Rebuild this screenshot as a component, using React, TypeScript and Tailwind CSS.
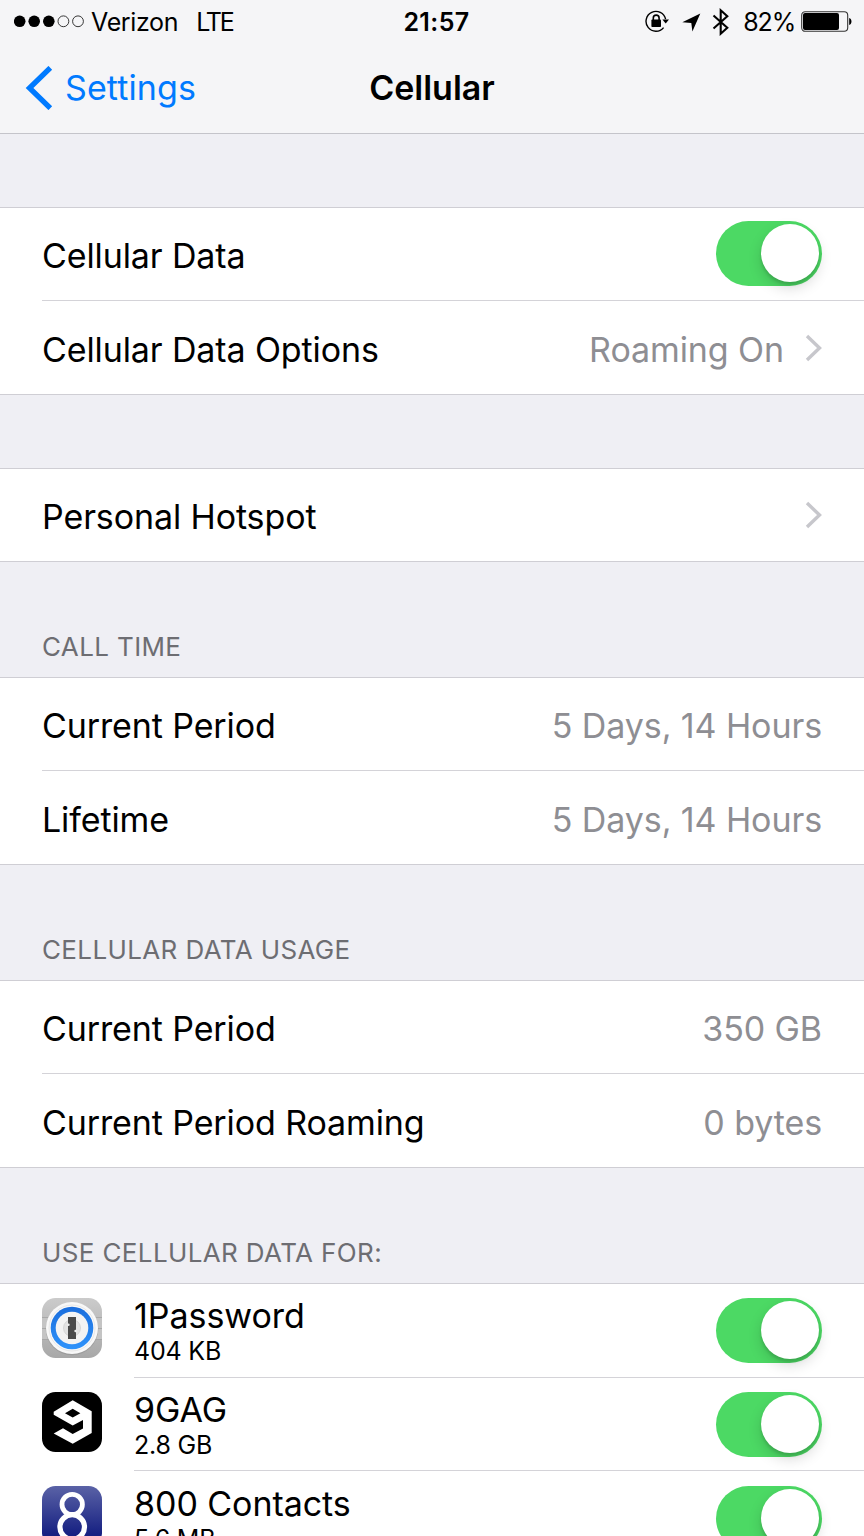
import type { ReactNode } from "react";

type RowProps = {
  label: string;
  value?: string;
  chevron?: boolean;
  toggle?: boolean;
  last?: boolean;
  only?: boolean;
};

function Chevron() {
  return (
    <svg width="17" height="28" viewBox="0 0 17 28" fill="none" className="ml-[21px] shrink-0">
      <path d="M2 2 L14.5 14 L2 26" stroke="#c7c7cc" strokeWidth="3.4" />
    </svg>
  );
}

function Toggle() {
  return (
    <button className="flex h-[65px] w-[106px] shrink-0 items-start justify-end rounded-full bg-[#4cd964] pt-[3px] pr-[3px]">
      <span className="size-[58px] rounded-full bg-white shadow-[0_6px_14px_rgba(0,0,0,0.15),0_3px_3px_rgba(0,0,0,0.12)]" />
    </button>
  );
}

function Row({ label, value, chevron, toggle, last, only }: RowProps) {
  // the last row of a group has no inset divider
  const border = last || only ? "" : "border-b border-[#d4d3d8]";
  const height = only ? "h-[92px]" : "h-[93px]";
  const textPad = last ? "pt-[5px]" : "pt-[3px]";

  return (
    <div className="pl-[42px]">
      <div className={`flex items-center justify-between pr-[42px] ${height} ${border}`}>
        <span className={`text-[34px] leading-10 tracking-[-0.11px] text-black ${textPad}`}>{label}</span>
        <div className="flex items-center">
          {value && (
            <span className={`text-[34px] leading-10 tracking-[-0.09px] text-[#8e8e93] ${textPad}`}>{value}</span>
          )}
          {chevron && <Chevron />}
          {toggle && (
            <div className="pb-px">
              <Toggle />
            </div>
          )}
        </div>
      </div>
    </div>
  );
}

function Group({ children }: { children: ReactNode }) {
  return <div className="border-y border-[#cfced4] bg-white">{children}</div>;
}

function GroupTitle({ children }: { children: ReactNode }) {
  return (
    <h2 className="flex h-[115px] items-end pb-[14px] pl-[42px] text-[26px] leading-8 tracking-[0.37px] text-[#6d6d72]">
      {children}
    </h2>
  );
}

function OnePasswordIcon() {
  return (
    <svg width="60" height="60" viewBox="0 0 60 60">
      <defs>
        <linearGradient id="op-bg" x1="0" y1="0" x2="0" y2="1">
          <stop offset="0" stopColor="#cbcbcb" />
          <stop offset="1" stopColor="#a8a8a8" />
        </linearGradient>
        <linearGradient id="op-ring" x1="0" y1="0" x2="0" y2="1">
          <stop offset="0" stopColor="#1a6ddc" />
          <stop offset="1" stopColor="#2f93fb" />
        </linearGradient>
      </defs>
      <rect width="60" height="60" rx="13.5" fill="url(#op-bg)" />
      <rect y="19.5" width="60" height="22" fill="#c4c4c4" />
      <path d="M0 19.5H60M0 30.5H60M0 41.5H60" stroke="#a2a2a2" strokeWidth="0.8" />
      <circle cx="30" cy="31" r="26.3" fill="#8d8d8d" opacity="0.5" />
      <circle cx="30" cy="30" r="26" fill="#f8f8f8" />
      <circle cx="30" cy="30" r="23" fill="none" stroke="#e2e2e2" strokeWidth="0.8" />
      <circle cx="30" cy="30" r="21.3" fill="url(#op-ring)" />
      <circle cx="30" cy="30" r="16.3" fill="#f3f3f3" />
      <circle cx="30" cy="30" r="8.5" fill="#e2e2e2" stroke="#d0d0d0" strokeWidth="0.8" />
      <path d="M26 19H34V41H26Z" fill="#4a4a4a" />
      <circle cx="26.4" cy="26.8" r="1.3" fill="#ececec" />
      <circle cx="33.6" cy="33" r="1.3" fill="#ececec" />
    </svg>
  );
}

function NineGagIcon() {
  return (
    <svg width="60" height="60" viewBox="0 0 60 60">
      <rect width="60" height="60" rx="13.5" fill="#000" />
      <path
        fillRule="evenodd"
        fill="#fff"
        d="M30.7 8.3L49.7 19.3V40.9L30.7 51.8L11.7 41.4L21 36.3L30.7 42L41 36.5V28L30.7 33.6L11.7 22.8V19.8ZM30.7 16.8L23 21.2L30.7 25.4L38.4 21.2Z"
      />
    </svg>
  );
}

function ContactsIcon() {
  return (
    <svg width="60" height="60" viewBox="0 0 60 60">
      <defs>
        <linearGradient id="contacts-bg" x1="0" y1="0" x2="0" y2="1">
          <stop offset="0" stopColor="#5a62a6" />
          <stop offset="0.8" stopColor="#172182" />
        </linearGradient>
      </defs>
      <rect width="60" height="60" rx="13.5" fill="url(#contacts-bg)" />
      <circle cx="30.2" cy="18.5" r="10.2" fill="none" stroke="#fff" strokeWidth="4.8" />
      <circle cx="30.2" cy="41" r="12.3" fill="none" stroke="#fff" strokeWidth="5.2" />
    </svg>
  );
}

const apps = [
  { name: "1Password", size: "404 KB", icon: <OnePasswordIcon />, height: "h-[94px]", pad: "pt-[14px]" },
  { name: "9GAG", size: "2.8 GB", icon: <NineGagIcon />, height: "h-[93px]", pad: "pt-[14px]" },
  { name: "800 Contacts", size: "5.6 MB", icon: <ContactsIcon />, height: "h-[94px]", pad: "pt-[15px]" },
];

function StatusBar() {
  return (
    <div className="grid h-11 grid-cols-[1fr_auto_1fr] items-center text-[25px] leading-none text-black">
      <div className="flex items-center pl-[14px]">
        <svg width="71" height="14" viewBox="0 0 71 14" className="mr-[6px]">
          <circle cx="5.7" cy="6.3" r="5.8" />
          <circle cx="20.2" cy="6.3" r="5.8" />
          <circle cx="34.8" cy="6.3" r="5.8" />
          <circle cx="49.4" cy="6.3" r="5.4" fill="none" stroke="#222" strokeWidth="0.9" />
          <circle cx="64" cy="6.3" r="5.4" fill="none" stroke="#222" strokeWidth="0.9" />
        </svg>
        <span className="tracking-[-0.35px]">Verizon</span>
        <span className="ml-[18px] tracking-[-2.2px]">LTE</span>
      </div>
      <span className="pl-[9px] font-semibold tracking-[0.4px]">21:57</span>
      <div className="flex items-center justify-end pr-[12px]">
        {/* rotation lock */}
        <svg width="24" height="24" viewBox="0 0 24 24" fill="none" className="mr-[13px]">
          <path d="M20.6 9.2A9.9 9.9 0 1 0 18.6 17.6" stroke="#000" strokeWidth="1.4" />
          <path d="M17.4 9.6H24L20.7 13.4Z" fill="#000" />
          <rect x="6.4" y="9.6" width="9.6" height="7.4" rx="0.8" fill="#000" />
          <path d="M8.3 10.2V8a2.9 2.9 0 0 1 5.8 0v2.2" stroke="#000" strokeWidth="1.6" />
        </svg>
        {/* location */}
        <svg width="19" height="19" viewBox="0 0 19 19" className="mr-[11px]">
          <path d="M18.3 0.5L10.4 18.5L9.3 9.9L0.3 9.2Z" />
        </svg>
        {/* bluetooth */}
        <svg width="18" height="28" viewBox="0 0 18 28" fill="none" className="mr-[13px]">
          <path d="M1.5 7.5L15.3 19.8L8.7 25.7V2.3L15.3 8.2L1.5 20.5" stroke="#000" strokeWidth="2.1" />
        </svg>
        <span className="tracking-[-1.2px]">82%</span>
        <svg width="51" height="22" viewBox="0 0 51 22" fill="none" className="ml-[6px]">
          <rect x="0.7" y="0.7" width="46" height="19.6" rx="3.5" stroke="#333" strokeWidth="1.1" />
          <rect x="2" y="2" width="36" height="17" rx="2" fill="#000" />
          <path d="M48.2 7C51.2 7.5 51.2 13.5 48.2 14Z" fill="#000" />
        </svg>
      </div>
    </div>
  );
}

export default function App() {
  return (
    <div className="h-[1536px] w-[864px] overflow-hidden bg-[#efeff4] font-[Inter,sans-serif]">
      <header className="h-[134px] border-b border-[#c4c4ca] bg-[#f5f5f7]">
        <StatusBar />
        <nav className="grid h-[88px] grid-cols-3 items-center text-[34px] leading-10">
          <button className="flex items-center pl-[25px] text-[#007aff]">
            <svg width="28" height="44" viewBox="0 0 28 44" fill="none" className="mr-[12px]">
              <path d="M25.3 1.8L4.5 22L25.3 42.2" stroke="#007aff" strokeWidth="5.3" />
            </svg>
            <span className="tracking-[0.1px]">Settings</span>
          </button>
          <h1 className="text-center font-semibold">Cellular</h1>
        </nav>
      </header>

      <main>
        <div className="h-[73px]" />
        <Group>
          <Row label="Cellular Data" toggle />
          <Row label="Cellular Data Options" value="Roaming On" chevron last />
        </Group>

        <div className="h-[73px]" />
        <Group>
          <Row label="Personal Hotspot" chevron only />
        </Group>

        <GroupTitle>CALL TIME</GroupTitle>
        <Group>
          <Row label="Current Period" value="5 Days, 14 Hours" />
          <Row label="Lifetime" value="5 Days, 14 Hours" last />
        </Group>

        <GroupTitle>CELLULAR DATA USAGE</GroupTitle>
        <Group>
          <Row label="Current Period" value="350 GB" />
          <Row label="Current Period Roaming" value="0 bytes" last />
        </Group>

        <GroupTitle>USE CELLULAR DATA FOR:</GroupTitle>
        <Group>
          {apps.map((app) => (
            <div key={app.name} className={`flex pl-[42px] ${app.height}`}>
              <div className={`mr-[32px] w-[60px] shrink-0 ${app.pad}`}>{app.icon}</div>
              <div
                className={`flex flex-1 items-start justify-between border-b border-[#d4d3d8] pr-[42px] ${app.pad}`}
              >
                <div>
                  <p className="text-[34px] leading-9 tracking-[-0.05px] text-black">{app.name}</p>
                  <p className="mt-px text-[25px] leading-8 tracking-[-0.2px] text-black">{app.size}</p>
                </div>
                <Toggle />
              </div>
            </div>
          ))}
        </Group>
      </main>
    </div>
  );
}
